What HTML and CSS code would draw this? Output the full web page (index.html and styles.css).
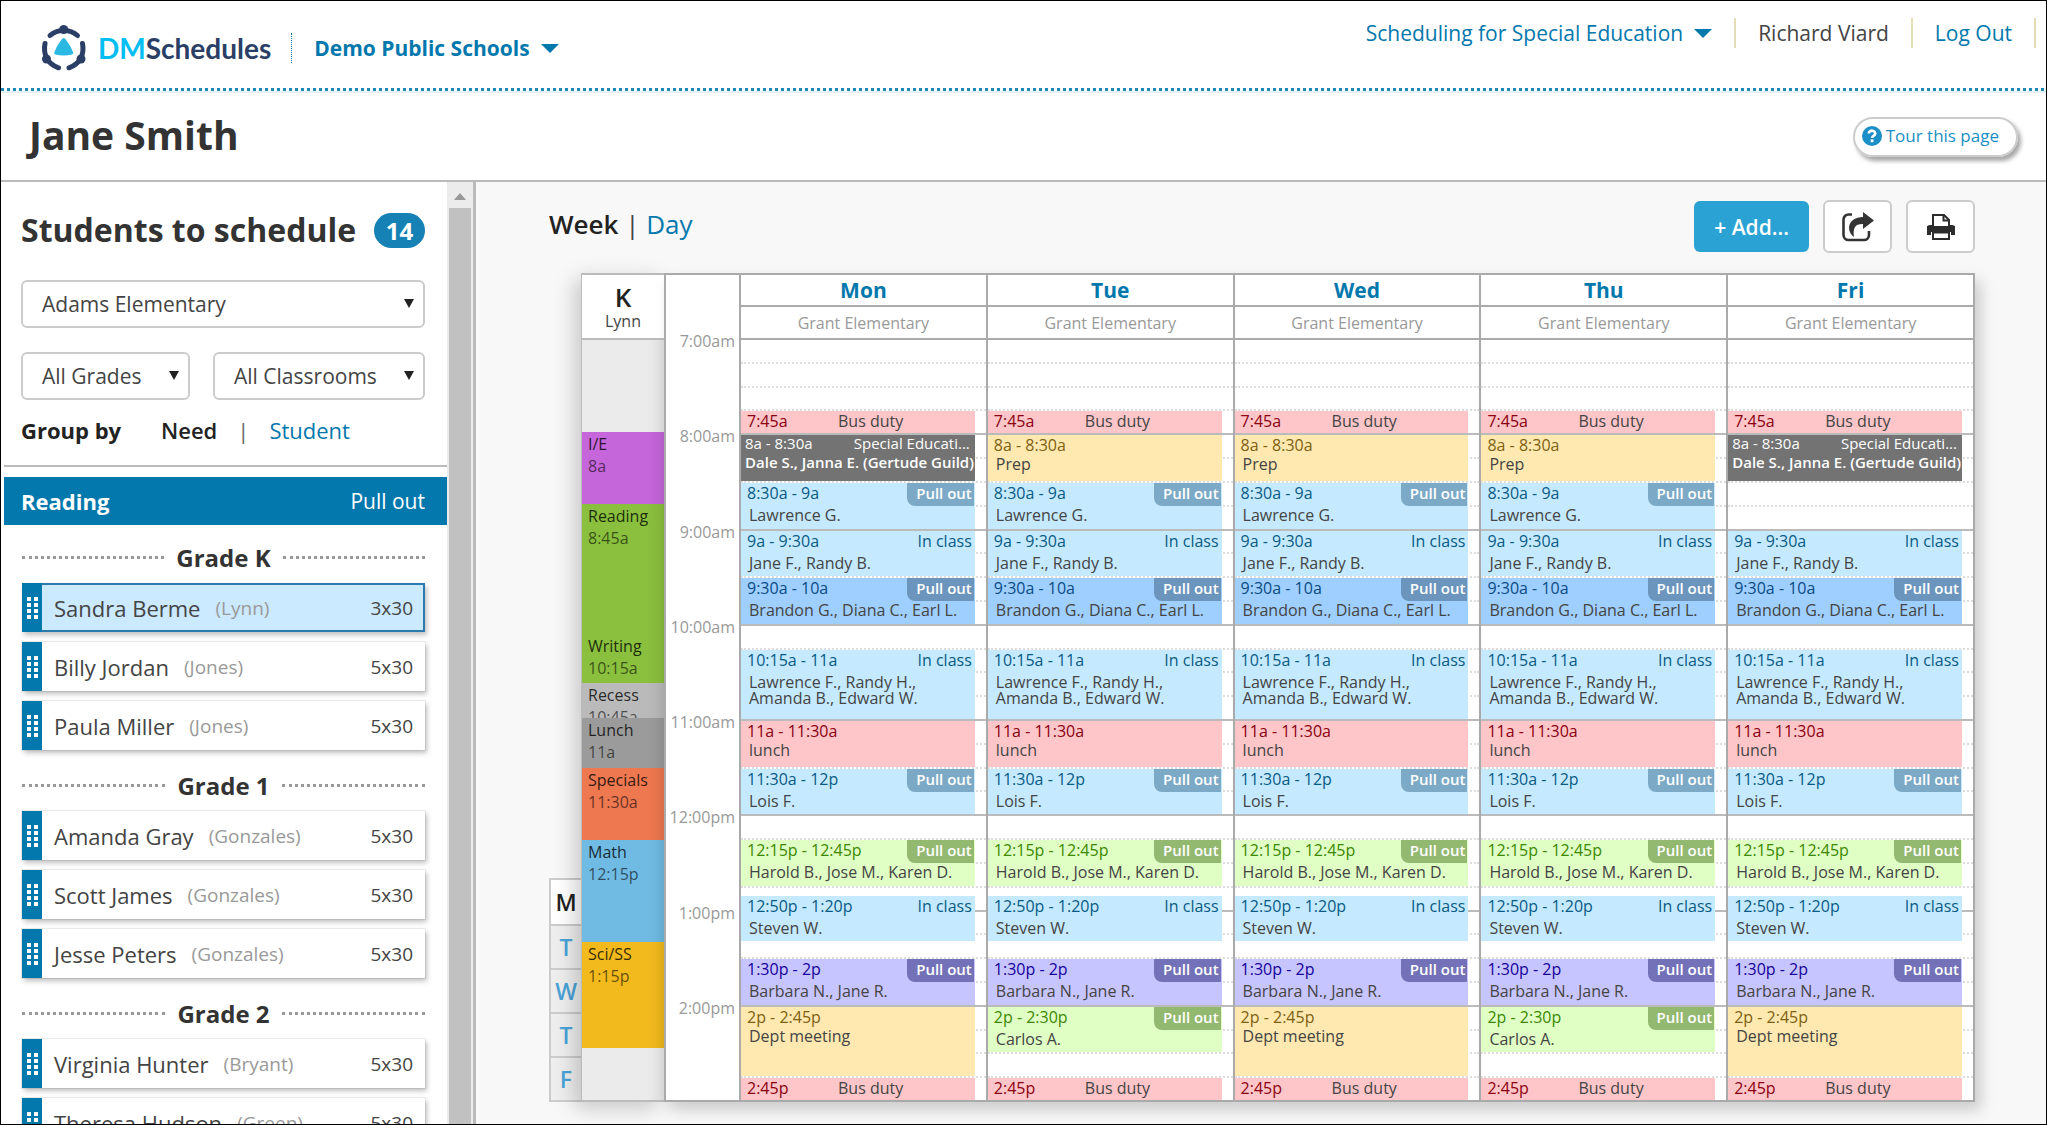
FILE: index.html
```
<!DOCTYPE html>
<html lang="en">

<head>
    <meta charset="UTF-8">
    <meta name="viewport" content="width=device-width, initial-scale=1.0">
    <title>DMSchedules - Jane Smith</title>
    <link rel="stylesheet" href="styles.css">
</head>

<body>
    <header class="topbar">
        <a class="logo" href="#">
            <svg width="44" height="46" viewBox="0 0 44 46" aria-hidden="true">
                <g fill="none" stroke="#2b3f66" stroke-width="5" stroke-linecap="round">
                    <path d="M8 10.5Q13.500 5.500 21.700 5.500T35.500 10.500" />
                    <path d="M3 18.500Q1.500 26 4.500 33Q8.500 40 16.500 42.800" />
                    <path d="M40.500 18.500Q42 26 39 33Q35 40 27 42.800" />
                </g>
                <g fill="#2b3f66">
                    <circle cx="21.7" cy="4.5" r="4.500" />
                    <circle cx="4.5" cy="34" r="4.500" />
                    <circle cx="39" cy="34" r="4.500" />
                </g>
                <path d="M19.6 14.6Q21.7 11.6 23.8 14.6Q28.5 20.5 31.2 27.6Q31.6 29.2 30 29.6Q21.7 31.6 13.4 29.6Q11.8 29.2 12.2 27.6Q14.9 20.5 19.6 14.6Z" fill="#2bb8e3" />
            </svg>
            <span class="logo-text"><span class="logo-dm">DM</span>Schedules</span>
        </a>
        <button class="district">Demo Public Schools <span class="caret"></span></button>
        <nav class="user-nav">
            <button class="module">Scheduling for Special Education <span class="caret"></span></button>
            <span class="user-name">Richard Viard</span>
            <a href="#">Log Out</a>
        </nav>
    </header>

    <div class="title-bar">
        <h1>Jane Smith</h1>
        <button class="tour">
            <svg width="20" height="20" viewBox="0 0 20 20" aria-hidden="true">
                <circle cx="10" cy="10" r="10" fill="#1c8fc6" />
                <path d="M6.8 7.6C6.8 3.6 13.4 3.8 13.2 7.6C13.1 9.8 10.1 9.7 10.1 12" fill="none" stroke="#fff" stroke-width="2.6" />
                <rect x="8.7" y="13.4" width="2.8" height="2.8" fill="#fff" />
            </svg>
            Tour this page
        </button>
    </div>

    <div class="app">
        <aside class="sidebar">
            <div class="side-head">
                <h2>Students to schedule</h2>
                <span class="count">14</span>
            </div>
            <div class="filters">
                <div class="select wide">
                    <select aria-label="School"><option>Adams Elementary</option></select>
                </div>
                <div class="select">
                    <select aria-label="Grade"><option>All Grades</option></select>
                </div>
                <div class="select">
                    <select aria-label="Classroom"><option>All Classrooms</option></select>
                </div>
            </div>
            <div class="group-by">
                <span class="group-label">Group by</span>
                <strong>Need</strong>
                <span class="sep">|</span>
                <a href="#">Student</a>
            </div>
            <div class="need-bar"><strong>Reading</strong><span>Pull out</span></div>
            <div class="students" id="students"></div>
        </aside>
        <div class="scrollbar"><span class="scroll-up"></span><span class="scroll-thumb"></span></div>

        <main class="main">
            <div class="toolbar">
                <div class="view-switch"><strong>Week</strong> | <a href="#">Day</a></div>
                <button class="btn-add">+ Add...</button>
                <button class="btn-icon" aria-label="Share">
                    <svg width="34" height="32" viewBox="0 0 34 32" aria-hidden="true">
                        <path d="M11 3.5H7.5a5 5 0 0 0-5 5V24a5 5 0 0 0 5 5H23a5 5 0 0 0 5-5v-4" fill="none" stroke="#333" stroke-width="2.6" />
                        <path d="M22 1L33 9.5L22 18V13C15 12.6 11.5 16 13 26C5 20 6 6.500 22 6Z" fill="#333" />
                    </svg>
                </button>
                <button class="btn-icon" aria-label="Print">
                    <svg width="28" height="28" viewBox="0 0 28 28" aria-hidden="true">
                        <path d="M0 15q0-3 3-3h22q3 0 3 3v7h-4v-3H4v3H0z" fill="#2c2c2c" />
                        <path d="M6 13V2h11l5 5v6" fill="#fff" stroke="#2c2c2c" stroke-width="2" />
                        <path d="M16.500 2v5.500H22" fill="none" stroke="#2c2c2c" stroke-width="2" />
                        <path d="M0 13h28v6H0z" fill="#2c2c2c" />
                        <path d="M6 19.500h16V26H6z" fill="#fff" stroke="#2c2c2c" stroke-width="2" />
                    </svg>
                </button>
            </div>

            <div class="calendar">
                <div class="day-tabs">
                    <button class="active">M</button>
                    <button>T</button>
                    <button>W</button>
                    <button>T</button>
                    <button>F</button>
                </div>
                <div class="classroom">
                    <div class="class-head"><strong>K</strong>Lynn</div>
                    <div class="subjects">
                        <div class="subject before"></div>
                        <div class="subject ie">I/E<span>8a</span></div>
                        <div class="subject reading">Reading<span>8:45a</span></div>
                        <div class="subject writing">Writing<span>10:15a</span></div>
                        <div class="subject recess">Recess<span>10:45a</span></div>
                        <div class="subject lunch">Lunch<span>11a</span></div>
                        <div class="subject specials">Specials<span>11:30a</span></div>
                        <div class="subject math">Math<span>12:15p</span></div>
                        <div class="subject science">Sci/SS<span>1:15p</span></div>
                        <div class="subject after"></div>
                    </div>
                </div>
                <div class="week" id="week">
                    <div class="times">
                        <div>7:00am</div>
                        <div>8:00am</div>
                        <div>9:00am</div>
                        <div>10:00am</div>
                        <div>11:00am</div>
                        <div>12:00pm</div>
                        <div>1:00pm</div>
                        <div>2:00pm</div>
                    </div>
                </div>
            </div>
        </main>
    </div>

    <script src="script.js"></script>
</body>

</html>
```
FILE: styles.css
```
* {
    box-sizing: border-box;
}

body {
    margin: 0;
    height: 100vh;
    display: flex;
    flex-direction: column;
    overflow: hidden;
    border: 1px solid #000;
    background: #fff;
    color: #444;
    font-family: "Open Sans", "Noto Sans", sans-serif;
    font-size: 16px;
}

h1,
h2,
h3 {
    margin: 0;
    font-weight: 700;
    color: #333;
}

strong {
    font-weight: 600;
    color: #222;
}

a {
    color: #0378ad;
    text-decoration: none;
}

button,
select {
    font: inherit;
    color: inherit;
    background: none;
    border: 0;
    padding: 0;
    cursor: pointer;
}

/* Top bar */
.topbar {
    display: flex;
    align-items: center;
    height: 92px;
    padding: 2px 10px 0 41px;
    flex-shrink: 0;
    background:
        repeating-linear-gradient(90deg, #1f88b5 0 3px, #fff 3px 6px) 0 87px / 100% 3px no-repeat,
        linear-gradient(#e3f0f5, #e3f0f5) 0 90px / 100% 2px no-repeat;
}

.logo {
    display: flex;
    align-items: center;
    gap: 12px;
}

.logo svg {
    overflow: visible;
}

.logo-text {
    font-family: Lato, sans-serif;
    font-size: 28px;
    font-weight: 700;
    line-height: 40px;
    color: #2b3f66;
}

.logo-dm {
    color: #00bdf2;
}

.district {
    display: flex;
    align-items: center;
    gap: 11px;
    margin-left: 20px;
    padding-left: 22px;
    border-left: 1px dotted #0378ad;
    font-size: 21px;
    font-weight: 700;
    line-height: 30px;
    color: #0378ad;
}

.caret {
    border: 9px solid transparent;
    border-top-color: #0378ad;
    border-bottom: 0;
}

.user-nav {
    display: flex;
    align-self: flex-start;
    margin-left: auto;
    padding-top: 15px;
    font-size: 21px;
    line-height: 30px;
}

.user-nav > * {
    padding: 0 22px;
    border-right: 2px solid #e5dcb8;
}

.module {
    display: flex;
    align-items: center;
    gap: 11px;
    color: #0378ad;
}

/* Title */
.title-bar {
    display: flex;
    align-items: center;
    justify-content: space-between;
    height: 89px;
    padding: 0 28px;
    flex-shrink: 0;
    border-bottom: 2px solid #bbb;
}

h1 {
    padding-bottom: 4px;
    font-size: 39px;
    line-height: 50px;
}

.tour {
    display: flex;
    align-items: center;
    gap: 4px;
    height: 40px;
    padding: 0 17px 2px 7px;
    border: 2px solid #ccc;
    border-radius: 20px;
    box-shadow: 3px 4px 4px rgba(0, 0, 0, 0.35);
    font-size: 17px;
    color: #1c8fc6;
}

/* Layout */
.app {
    display: flex;
    flex: 1;
    min-height: 0;
    padding-left: 3px;
}

.sidebar {
    width: 443px;
    flex-shrink: 0;
    overflow: hidden;
}

.scrollbar {
    display: flex;
    flex-direction: column;
    width: 29px;
    flex-shrink: 0;
    padding: 0 2px;
    background: #ececec;
    border-right: 3px solid #bbb;
}

.scroll-up {
    align-self: center;
    margin: 11px 0 8px;
    border: 6px solid transparent;
    border-bottom: 7px solid #999;
    border-top: 0;
}

.scroll-thumb {
    flex: 1;
    background: #c1c1c1;
}

/* Sidebar */
.side-head {
    display: flex;
    align-items: center;
    justify-content: space-between;
    padding: 28px 22px 30px 17px;
}

h2 {
    font-size: 32px;
    line-height: 40px;
}

.count {
    width: 51px;
    border-radius: 18px;
    background: #1581b4;
    color: #fff;
    font-size: 24px;
    font-weight: 700;
    line-height: 35px;
    text-align: center;
}

.filters {
    display: grid;
    grid-template-columns: 169px 1fr;
    gap: 24px 23px;
    padding: 0 22px 0 17px;
}

.select {
    position: relative;
}

.select.wide {
    grid-column: 1 / 3;
}

.select select {
    width: 100%;
    height: 48px;
    padding: 0 19px;
    border: 2px solid #ccc;
    border-radius: 6px;
    background: #fff;
    font-size: 21px;
    appearance: none;
}

.select::after {
    content: "";
    position: absolute;
    top: 19px;
    right: 11px;
    border: 5px solid transparent;
    border-top: 9px solid #222;
    border-bottom: 0;
    pointer-events: none;
}

.group-by {
    display: flex;
    padding: 15px 17px 20px;
    border-bottom: 2px solid #bbb;
    font-size: 22px;
    line-height: 30px;
}

.group-label {
    width: 140px;
    font-weight: 700;
    color: #222;
}

.sep {
    margin: 0 20px;
    color: #666;
}

.need-bar {
    display: flex;
    justify-content: space-between;
    margin-top: 10px;
    padding: 0 22px 0 17px;
    background: #0378ad;
    color: #fff;
    font-size: 21px;
    line-height: 48px;
}

.need-bar strong {
    color: #fff;
    font-size: 22px;
    font-weight: 700;
}

.students {
    padding: 7px 22px 0 18px;
}

h3 {
    display: flex;
    align-items: center;
    gap: 12px;
    font-size: 24px;
    line-height: 51px;
}

h3::before,
h3::after {
    content: "";
    flex: 1;
    border-top: 3px dotted #999;
}

.student {
    display: flex;
    align-items: center;
    height: 49px;
    margin-bottom: 10px;
    padding-right: 12px;
    background: #fff;
    box-shadow: 2px 3px 5px rgba(0, 0, 0, 0.25), 0 0 0 1px #eee;
    font-size: 22px;
    cursor: grab;
}

.handle {
    display: flex;
    align-items: center;
    justify-content: center;
    align-self: stretch;
    width: 20px;
    margin-right: 12px;
    background: #0378ad;
}

.teacher {
    margin-left: 15px;
    font-size: 19px;
    color: #999;
}

.minutes {
    margin-left: auto;
    font-size: 19px;
}

.student.selected {
    background: #cbe9ff;
    box-shadow: inset 0 0 0 2px #2a7ab0, 2px 3px 5px rgba(0, 0, 0, 0.25);
}

/* Main */
.main {
    flex: 1;
    padding: 18px 71px 0 73px;
    background: #f8f8f8;
}

.toolbar {
    display: flex;
    align-items: center;
    gap: 14px;
    height: 53px;
    margin-bottom: 20px;
}

.view-switch {
    margin-right: auto;
    padding-bottom: 6px;
    font-size: 26px;
}

.btn-add {
    height: 51px;
    padding: 0 20px;
    border-radius: 6px;
    background: #2ba2d4;
    color: #fff;
    font-size: 21px;
    font-weight: 600;
}

.btn-icon {
    display: flex;
    align-items: center;
    justify-content: center;
    width: 69px;
    height: 53px;
    border: 2px solid #ccc;
    border-radius: 6px;
    background: #fff;
}

/* Calendar */
.calendar {
    display: flex;
}

.day-tabs {
    align-self: flex-end;
    width: 32px;
    border: 2px solid #ccc;
    border-right: 0;
}

.day-tabs button {
    display: block;
    width: 100%;
    height: 44px;
    background: #eee;
    color: #4aa3d8;
    font-size: 23px;
    font-weight: 600;
}

.day-tabs button + button {
    border-top: 2px solid #ccc;
}

.day-tabs .active {
    background: #fff;
    color: #222;
}

.classroom {
    width: 83px;
    border: 2px solid #bbb;
    border-width: 2px 0 2px 1px;
    background: #fff;
    box-shadow: -6px 6px 20px rgba(0, 0, 0, 0.2);
}

.class-head {
    display: flex;
    flex-direction: column;
    align-items: center;
    height: 65px;
    padding-top: 8px;
    border-bottom: 2px solid #bbb;
    line-height: 20px;
}

.class-head strong {
    font-size: 26px;
    line-height: 28px;
}

.subjects {
    display: flex;
    flex-direction: column;
    height: 760px;
}

.subject {
    flex: 1 1 0;
    min-height: 0;
    overflow: hidden;
    padding: 1px 6px 0;
    line-height: 22px;
    color: rgba(0, 0, 0, 0.8);
    background-image: linear-gradient(90deg, transparent 80%, rgba(0, 0, 0, 0.06));
}

.subject span {
    display: block;
    color: rgba(0, 0, 0, 0.6);
}

.before {
    flex-grow: 92;
    background-color: #ebebeb;
}

.ie {
    flex-grow: 73;
    background-color: #c566db;
}

.reading {
    flex-grow: 131;
    background-color: #8ac03d;
}

.writing {
    flex-grow: 48;
    background-color: #8ac03d;
}

.recess {
    flex-grow: 35;
    background-color: #bababa;
}

.lunch {
    flex-grow: 50;
    background-color: #9b9b9b;
}

.specials {
    flex-grow: 72;
    background-color: #ee7850;
}

.math {
    flex-grow: 103;
    background-color: #6fbbe3;
}

.science {
    flex-grow: 106;
    background-color: #f2ba1d;
}

.after {
    flex-grow: 52;
    background-color: #ebebeb;
}

.week {
    display: flex;
    flex: 1;
    border: 2px solid #aaa;
    background: #fff;
    box-shadow: 6px 8px 14px rgba(0, 0, 0, 0.18);
}

.times {
    display: flex;
    flex-direction: column;
    width: 73px;
    margin: 56px 0 7px;
    padding-right: 4px;
    color: #999;
    line-height: 20px;
    text-align: right;
}

.times div {
    flex: 1;
}

.day {
    flex: 1 1 0;
    min-width: 0;
    border-left: 2px solid #aaa;
    text-align: center;
}

.day-name {
    display: block;
    height: 32px;
    border-bottom: 2px solid #aaa;
    font-size: 21px;
    font-weight: 700;
    line-height: 30px;
}

.day-school {
    height: 31px;
    color: #999;
    line-height: 33px;
}

/* one row for every five minutes, 7am to 3pm */
.day-grid {
    display: grid;
    grid-template-columns: 100%;
    grid-template-rows: repeat(96, minmax(0, 1fr));
    height: 762px;
    text-align: left;
}

.slot {
    grid-column: 1;
    border-top: 2px dotted #ddd;
}

.slot.hour {
    border-top: 2px solid #bbb;
}

.slot.hour:first-child {
    border-top-color: #aaa;
}

.event {
    position: relative;
    grid-column: 1;
    margin: 2px 11px 0 0;
    padding: 2px 3px 0 6px;
    line-height: 16px;
}

.event-head {
    display: flex;
    justify-content: space-between;
}

.names {
    margin-top: 3px;
    padding-left: 2px;
    white-space: pre-line;
}

.service .names {
    margin-top: 6px;
}

.event .pull-out {
    position: absolute;
    top: 0;
    right: 1px;
    height: 23px;
    padding: 0 2px 0 9px;
    border-bottom-left-radius: 8px;
    color: #fff;
    font-size: 15px;
    font-weight: 600;
    line-height: 20px;
}

.sky {
    background: #c5eaff;
}

.sky .event-head {
    color: #0a5a85;
}

.sky .pull-out {
    background: #7caac6;
}

.blue {
    background: #9fcfff;
}

.blue .event-head {
    color: #0b4b85;
}

.blue .pull-out {
    background: #6b95bd;
}

.pink {
    background: #fec6c8;
}

.pink .event-head {
    color: #8b0010;
}

.yellow {
    background: #ffe9b0;
}

.yellow .event-head {
    color: #7d6010;
}

.green {
    background: #e0ffc5;
}

.green .event-head {
    color: #3c8800;
}

.green .pull-out {
    background: #93b870;
}

.violet {
    background: #c7c5ff;
}

.violet .event-head {
    color: #14009a;
}

.violet .pull-out {
    background: #7371b8;
}

.duty {
    padding-top: 0;
}

.duty .event-head {
    justify-content: flex-start;
    line-height: 21px;
}

.duty .time {
    width: 91px;
}

.duty .what {
    color: #444;
}

.dark {
    padding: 0 5px 0 4px;
    background: #737373;
    color: #fff;
    font-size: 15px;
}

.dark .names {
    padding-left: 0;
    font-weight: 600;
    white-space: nowrap;
}
```
FILE: script.js
```
const students = {
    "Grade K": [["Sandra Berme", "Lynn", "3x30"], ["Billy Jordan", "Jones", "5x30"], ["Paula Miller", "Jones", "5x30"]],
    "Grade 1": [["Amanda Gray", "Gonzales", "5x30"], ["Scott James", "Gonzales", "5x30"], ["Jesse Peters", "Gonzales", "5x30"]],
    "Grade 2": [["Virginia Hunter", "Bryant", "5x30"], ["Theresa Hudson", "Green", "5x30"]]
};

// start, end, label, colour, names, kind, days
const events = [
    ["7:45", "8:00", "7:45a", "pink duty", "", "Bus duty", "Mon Tue Wed Thu Fri"],
    ["8:00", "8:30", "8a - 8:30a", "dark", "Dale S., Janna E. (Gertude Guild)", "Special Educati...", "Mon Fri"],
    ["8:00", "8:30", "8a - 8:30a", "yellow", "Prep", "", "Tue Wed Thu"],
    ["8:30", "9:00", "8:30a - 9a", "sky service", "Lawrence G.", "Pull out", "Mon Tue Wed Thu"],
    ["9:00", "9:30", "9a - 9:30a", "sky service", "Jane F., Randy B.", "In class", "Mon Tue Wed Thu Fri"],
    ["9:30", "10:00", "9:30a - 10a", "blue service", "Brandon G., Diana C., Earl L.", "Pull out", "Mon Tue Wed Thu Fri"],
    ["10:15", "11:00", "10:15a - 11a", "sky service", "Lawrence F., Randy H.,\nAmanda B., Edward W.", "In class", "Mon Tue Wed Thu Fri"],
    ["11:00", "11:30", "11a - 11:30a", "pink", "lunch", "", "Mon Tue Wed Thu Fri"],
    ["11:30", "12:00", "11:30a - 12p", "sky service", "Lois F.", "Pull out", "Mon Tue Wed Thu Fri"],
    ["12:15", "12:45", "12:15p - 12:45p", "green service", "Harold B., Jose M., Karen D.", "Pull out", "Mon Tue Wed Thu Fri"],
    ["12:50", "13:20", "12:50p - 1:20p", "sky service", "Steven W.", "In class", "Mon Tue Wed Thu Fri"],
    ["13:30", "14:00", "1:30p - 2p", "violet service", "Barbara N., Jane R.", "Pull out", "Mon Tue Wed Thu Fri"],
    ["14:00", "14:45", "2p - 2:45p", "yellow", "Dept meeting", "", "Mon Wed Fri"],
    ["14:00", "14:30", "2p - 2:30p", "green service", "Carlos A.", "Pull out", "Tue Thu"],
    ["14:45", "15:00", "2:45p", "pink duty", "", "Bus duty", "Mon Tue Wed Thu Fri"]
];

// Grid row of a time of day, in five minute steps from 7am
function row(time) {
    const [h, m] = time.split(":").map(Number);
    return (h - 7) * 12 + m / 5 + 1;
}

function dots() {
    let rects = "";
    for (let y = 0; y < 4; y++) {
        rects += `<rect x="0" y="${y * 6}" width="4" height="4"/><rect x="7" y="${y * 6}" width="4" height="4"/>`;
    }
    return `<svg width="11" height="22" fill="#fff" aria-hidden="true">${rects}</svg>`;
}

function renderStudents() {
    let html = "";
    for (const grade in students) {
        html += `<h3>${grade}</h3>`;
        students[grade].forEach(([name, teacher, minutes]) => {
            const selected = name === "Sandra Berme" ? " selected" : "";
            html += `<div class="student${selected}"><span class="handle">${dots()}</span>${name}
                <span class="teacher">(${teacher})</span><span class="minutes">${minutes}</span></div>`;
        });
    }
    document.getElementById("students").innerHTML = html;
}

function renderEvent([start, end, label, colour, names, kind]) {
    const kindClass = kind === "Pull out" ? "pull-out" : "what";
    return `<div class="event ${colour}" style="grid-row: ${row(start)} / ${row(end)}">
        <div class="event-head"><span class="time">${label}</span>${kind ? `<span class="${kindClass}">${kind}</span>` : ""}</div>
        ${names ? `<div class="names">${names}</div>` : ""}
    </div>`;
}

function renderWeek() {
    const week = document.getElementById("week");
    ["Mon", "Tue", "Wed", "Thu", "Fri"].forEach(day => {
        let grid = "";
        for (let i = 0; i < 32; i++) {
            grid += `<div class="slot${i % 4 ? "" : " hour"}" style="grid-row: ${i * 3 + 1} / span 3"></div>`;
        }
        events.filter(e => e[6].includes(day)).forEach(e => grid += renderEvent(e));
        week.insertAdjacentHTML("beforeend", `<section class="day">
            <a class="day-name" href="#">${day}</a>
            <div class="day-school">Grant Elementary</div>
            <div class="day-grid">${grid}</div>
        </section>`);
    });
}

renderStudents();
renderWeek();
```
